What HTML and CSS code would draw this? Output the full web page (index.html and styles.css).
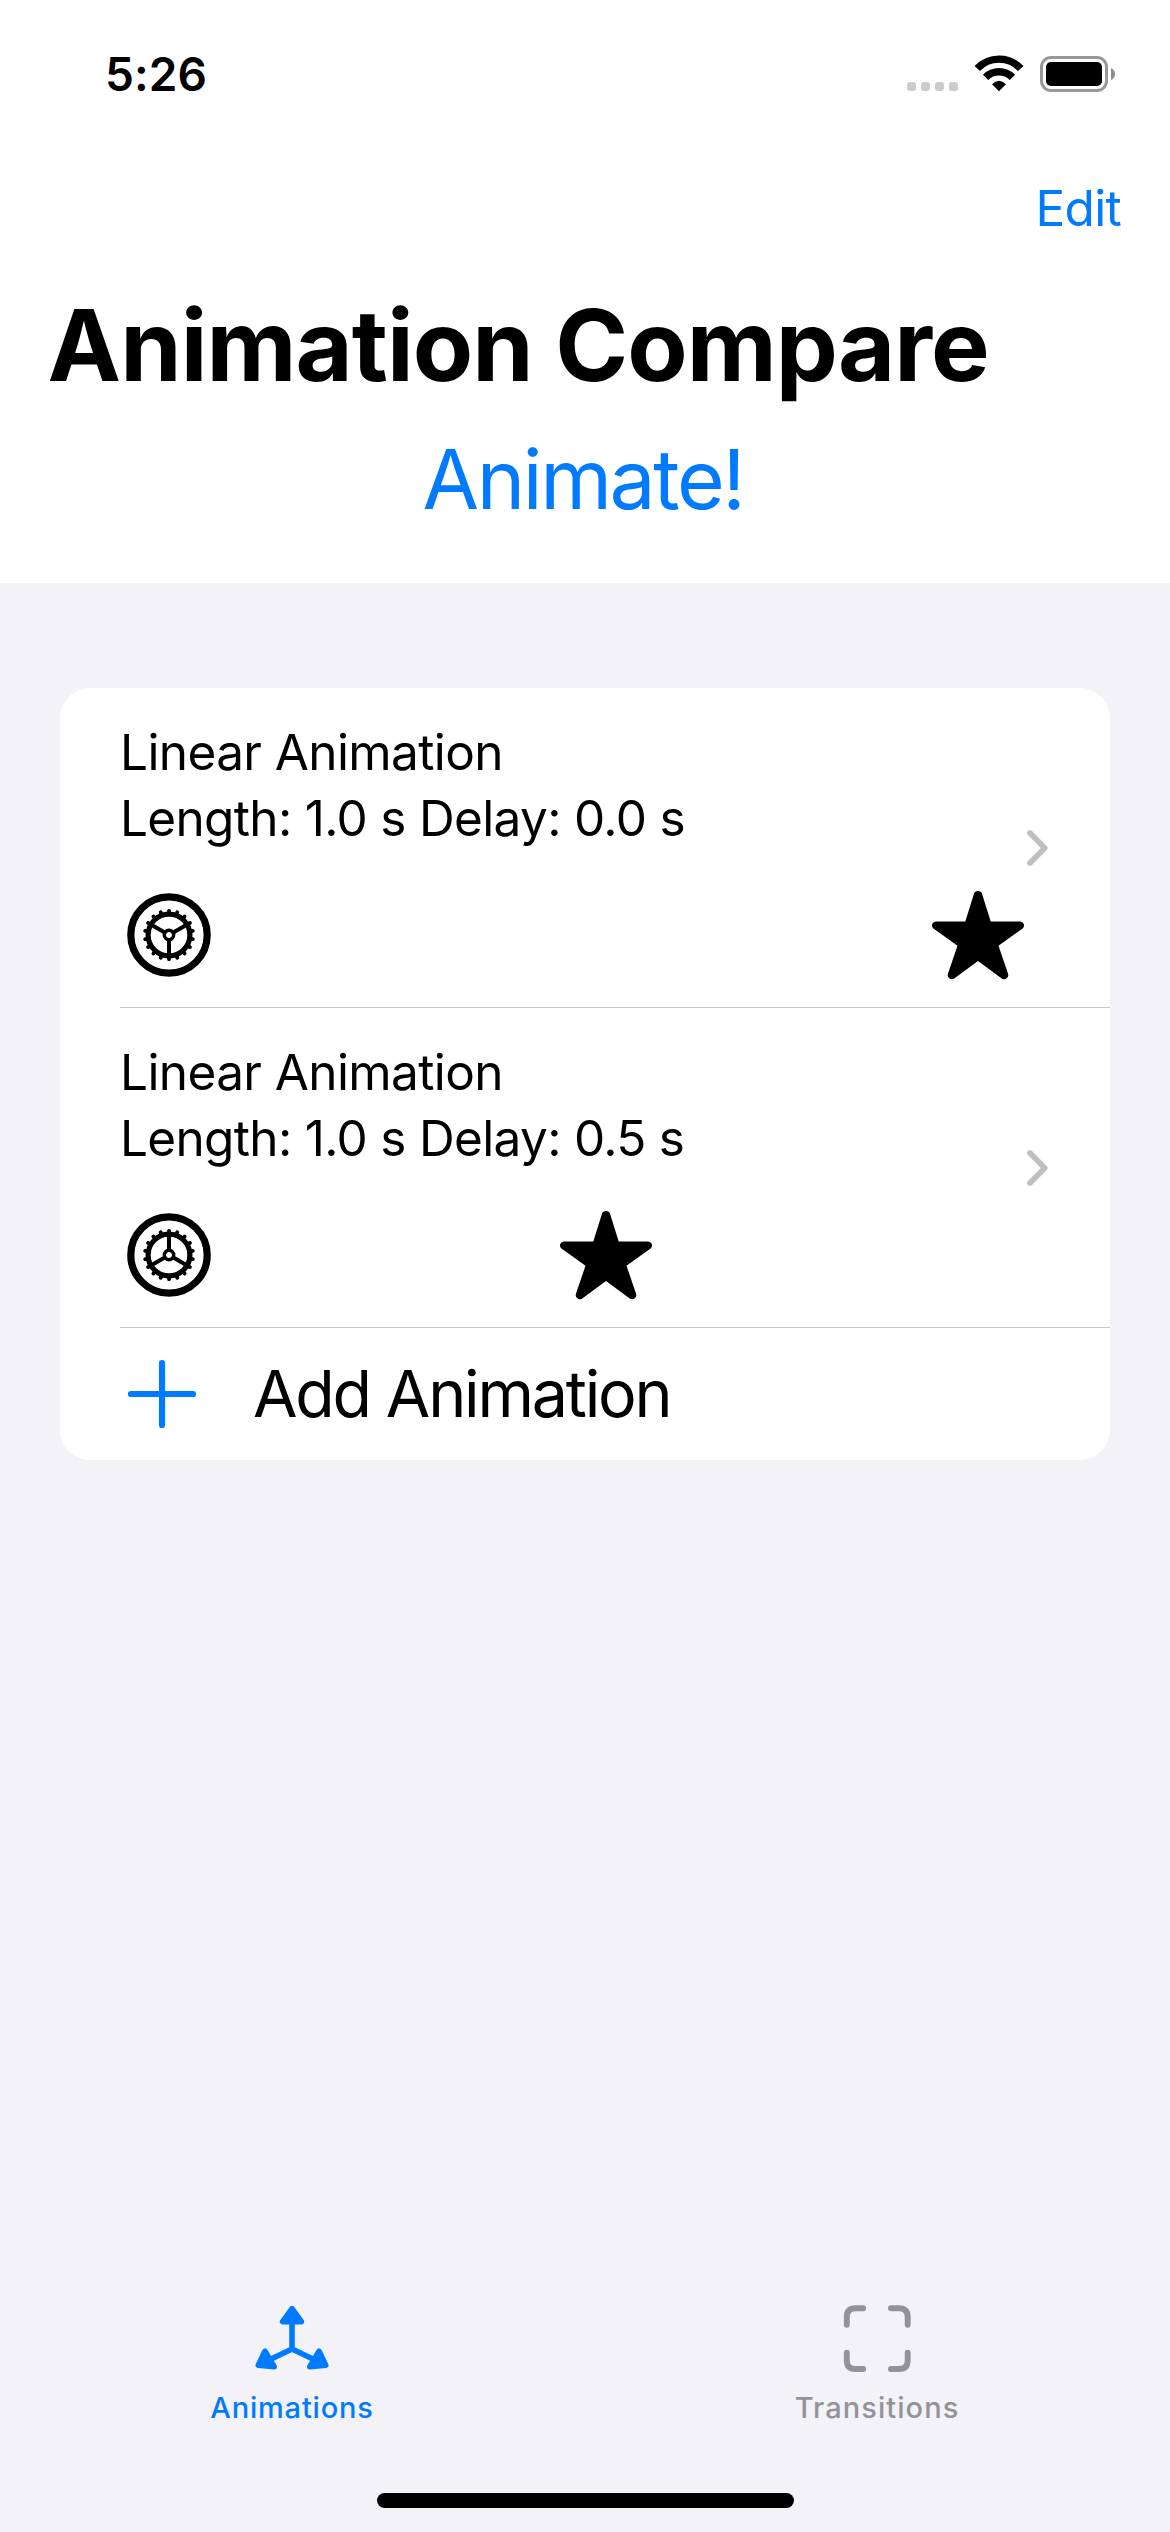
FILE: index.html
```html
<!DOCTYPE html>
<html lang="en">
<head>
<meta charset="utf-8">
<title>Animation Compare</title>
<link rel="stylesheet" href="styles.css">
</head>
<body>
<svg class="defs" aria-hidden="true">
  <defs>
    <symbol id="star" viewBox="0 0 92 90">
      <path d="M33.3 31.4 41.9 4A4.3 4.3 0 0 1 50.1 4L58.7 31.4H87.7A4 4 0 0 1 90.2 38.7L66.5 55.7 75.9 83.3A4.2 4.2 0 0 1 69.4 88.2L46 71 22.6 88.2A4.2 4.2 0 0 1 16.1 83.3L25.5 55.7 1.8 38.7A4 4 0 0 1 4.3 31.4Z"/>
    </symbol>
    <symbol id="gear" viewBox="-42 -42 84 84">
      <g fill="none" stroke="#000">
        <circle r="38.2" stroke-width="7.2"/>
        <circle r="20.9" stroke-width="5.2"/>
        <circle r="4.7" stroke-width="3.4"/>
        <g stroke-width="3.8" stroke-linecap="round">
          <path id="teeth" d="M0-22V-24.2M0 22V24.2"/>
          <use href="#teeth" transform="rotate(20)"/>
          <use href="#teeth" transform="rotate(40)"/>
          <use href="#teeth" transform="rotate(60)"/>
          <use href="#teeth" transform="rotate(80)"/>
          <use href="#teeth" transform="rotate(100)"/>
          <use href="#teeth" transform="rotate(120)"/>
          <use href="#teeth" transform="rotate(140)"/>
          <use href="#teeth" transform="rotate(160)"/>
        </g>
        <path d="M0-5V-20M4.3 2.5 17.3 10M-4.3 2.5-17.3 10" stroke-width="4"/>
      </g>
    </symbol>
    <symbol id="chevron" viewBox="0 0 24 38">
      <path d="M4 4 18.8 19 4 34" fill="none" stroke="#bfbfbf" stroke-width="5.6" stroke-linecap="round" stroke-linejoin="round"/>
    </symbol>
  </defs>
</svg>

<div class="screen">
  <header class="header">
    <div class="status-bar">
      <span class="clock">5:26</span>
      <div class="status-icons">
        <div class="signal"><i></i><i></i><i></i><i></i></div>
        <svg class="wifi" width="50" height="37" viewBox="0 0 50 37">
          <path d="M3.3 13.6A29.5 29.5 0 0 1 46.7 13.6M11.6 22.3A19 19 0 0 1 38.4 22.3" fill="none" stroke="#000" stroke-width="7.4"/>
          <path d="M18 29.3Q25 22.3 32 29.3L25 36.3Z"/>
        </svg>
        <svg class="battery" width="76" height="37" viewBox="0 0 76 37">
          <rect x="1.5" y="2.5" width="65" height="33" rx="9.5" fill="none" stroke="#999" stroke-width="3"/>
          <rect x="6" y="7" width="56" height="24" rx="5"/>
          <path d="M71 13Q75 15 75 19T71 25Z" fill="#8c8c8c"/>
        </svg>
      </div>
    </div>
    <nav class="nav-bar"><a class="edit">Edit</a></nav>
    <h1 class="title">Animation Compare</h1>
    <a class="animate">Animate!</a>
  </header>

  <main class="content">
    <section class="card">
      <article class="row">
        <div class="row-body">
          <p class="name">Linear Animation</p>
          <p class="timing">Length: 1.0 s Delay: 0.0 s</p>
          <div class="track">
            <svg class="gear gear-turned" width="84" height="84"><use href="#gear"/></svg>
            <svg class="star star-end" width="92" height="90"><use href="#star"/></svg>
          </div>
        </div>
        <svg class="chevron" width="24" height="38"><use href="#chevron"/></svg>
      </article>
      <article class="row">
        <div class="row-body">
          <p class="name">Linear Animation</p>
          <p class="timing">Length: 1.0 s Delay: 0.5 s</p>
          <div class="track">
            <svg class="gear" width="84" height="84"><use href="#gear"/></svg>
            <svg class="star star-mid" width="92" height="90"><use href="#star"/></svg>
          </div>
        </div>
        <svg class="chevron" width="24" height="38"><use href="#chevron"/></svg>
      </article>
      <div class="add-row">
        <svg width="70" height="70" viewBox="0 0 70 70"><path d="M35 4V66M4 35H66" fill="none" stroke="#007aff" stroke-width="6.2" stroke-linecap="round"/></svg>
        <span class="add-label">Add Animation</span>
      </div>
    </section>
  </main>

  <footer class="tab-bar">
    <a class="tab tab-active">
      <svg width="74" height="68" viewBox="0 0 74 68">
        <g fill="currentColor" stroke="currentColor" stroke-width="5.6" stroke-linejoin="round">
          <path d="M37 17V44M37 44 14 55M37 44 60 55" fill="none"/>
          <path d="M37 3.6 27.6 16.6H46.4ZM9.9 46.3 3.3 60.2 19.2 61.8ZM64.1 46.3 70.7 60.2 54.8 61.8Z"/>
        </g>
      </svg>
      <span class="label-animations">Animations</span>
    </a>
    <a class="tab">
      <svg width="68" height="68" viewBox="0 0 68 68">
        <path d="M3.8 19.8V12Q3.8 3.3 12.5 3.3H20.2M48 3.3H56Q64.7 3.3 64.7 12V19.8M64.7 47.7V55.5Q64.7 64 56 64H48M20.2 64H12.5Q3.8 64 3.8 55.5V47.7" fill="none" stroke="currentColor" stroke-width="5.9" stroke-linecap="round"/>
      </svg>
      <span class="label-transitions">Transitions</span>
    </a>
  </footer>
  <div class="home-indicator"></div>
</div>
</body>
</html>
```
FILE: styles.css
```css
* {
  box-sizing: border-box;
}

body {
  margin: 0;
  background: #f2f2f7;
  color: #000;
  font-family: Inter, "Liberation Sans", sans-serif;
}

h1,
p {
  margin: 0;
}

svg {
  display: block;
  flex: none;
}

.defs {
  display: none;
}

.screen {
  display: flex;
  flex-direction: column;
  width: 1170px;
  height: 2532px;
}

/* Header */

.header {
  display: flex;
  flex-direction: column;
  height: 583px;
  background: #fff;
}

.status-bar {
  display: flex;
  justify-content: space-between;
  align-items: flex-start;
  height: 141px;
  padding: 46px 54px 0 105px;
}

.clock {
  font-size: 46px;
  font-weight: 600;
  line-height: 56px;
  letter-spacing: 0.1px;
}

.status-icons {
  display: flex;
  align-items: flex-end;
  padding-top: 9px;
}

.signal {
  display: flex;
  gap: 5px;
  margin: 0 16px 1px 0;
}

.signal i {
  width: 9px;
  height: 9px;
  border-radius: 3px;
  background: #ccc;
}

.wifi {
  margin-right: 16px;
}

.nav-bar {
  display: flex;
  justify-content: flex-end;
  height: 144px;
  padding: 37px 49px 0 0;
}

.edit {
  color: #007aff;
  font-size: 49.5px;
  line-height: 60px;
  letter-spacing: -0.7px;
}

.title {
  padding-left: 47.5px;
  font-size: 98.6px;
  font-weight: 700;
  line-height: 120px;
  letter-spacing: -0.93px;
}

.animate {
  align-self: center;
  margin: 25px 4px 0 0;
  color: #007aff;
  font-size: 82px;
  line-height: 99px;
  letter-spacing: -2.4px;
}

/* List */

.content {
  flex: 1;
  padding: 105px 60px 0;
}

.card {
  border-radius: 30px;
  background: #fff;
}

.row {
  display: flex;
  align-items: center;
  height: 320px;
  margin-left: 60px;
  padding-right: 60px;
  border-bottom: 1px solid #c6c6c8;
}

.row-body {
  flex: 1;
  height: 100%;
  padding-top: 31px;
}

.name,
.timing {
  font-size: 49.5px;
  line-height: 66px;
}

.name {
  letter-spacing: -0.6px;
}

.timing {
  letter-spacing: -0.67px;
}

.track {
  display: flex;
  align-items: center;
  margin-top: 39px;
  padding-left: 7px;
}

.gear-turned {
  transform: rotate(180deg);
}

.star-end {
  margin-left: 721px;
}

.star-mid {
  margin-left: 349px;
}

.add-row {
  display: flex;
  align-items: center;
  gap: 56px;
  height: 132px;
  padding-left: 67px;
}

.add-label {
  font-size: 64.5px;
  line-height: 78px;
  letter-spacing: -2.2px;
}

/* Tab bar */

.tab-bar {
  display: flex;
  height: 188px;
}

.tab {
  display: flex;
  flex: 1;
  flex-direction: column;
  align-items: center;
  gap: 17px;
  padding-right: 1px;
  color: #929297;
  font-size: 29px;
  font-weight: 500;
  line-height: 35px;
}

.tab-active {
  color: #007aff;
}

.label-animations {
  letter-spacing: 0.8px;
}

.label-transitions {
  letter-spacing: 1.07px;
}

.home-indicator {
  align-self: center;
  width: 417px;
  height: 15px;
  margin-bottom: 24px;
  border-radius: 8px;
  background: #000;
}
```
